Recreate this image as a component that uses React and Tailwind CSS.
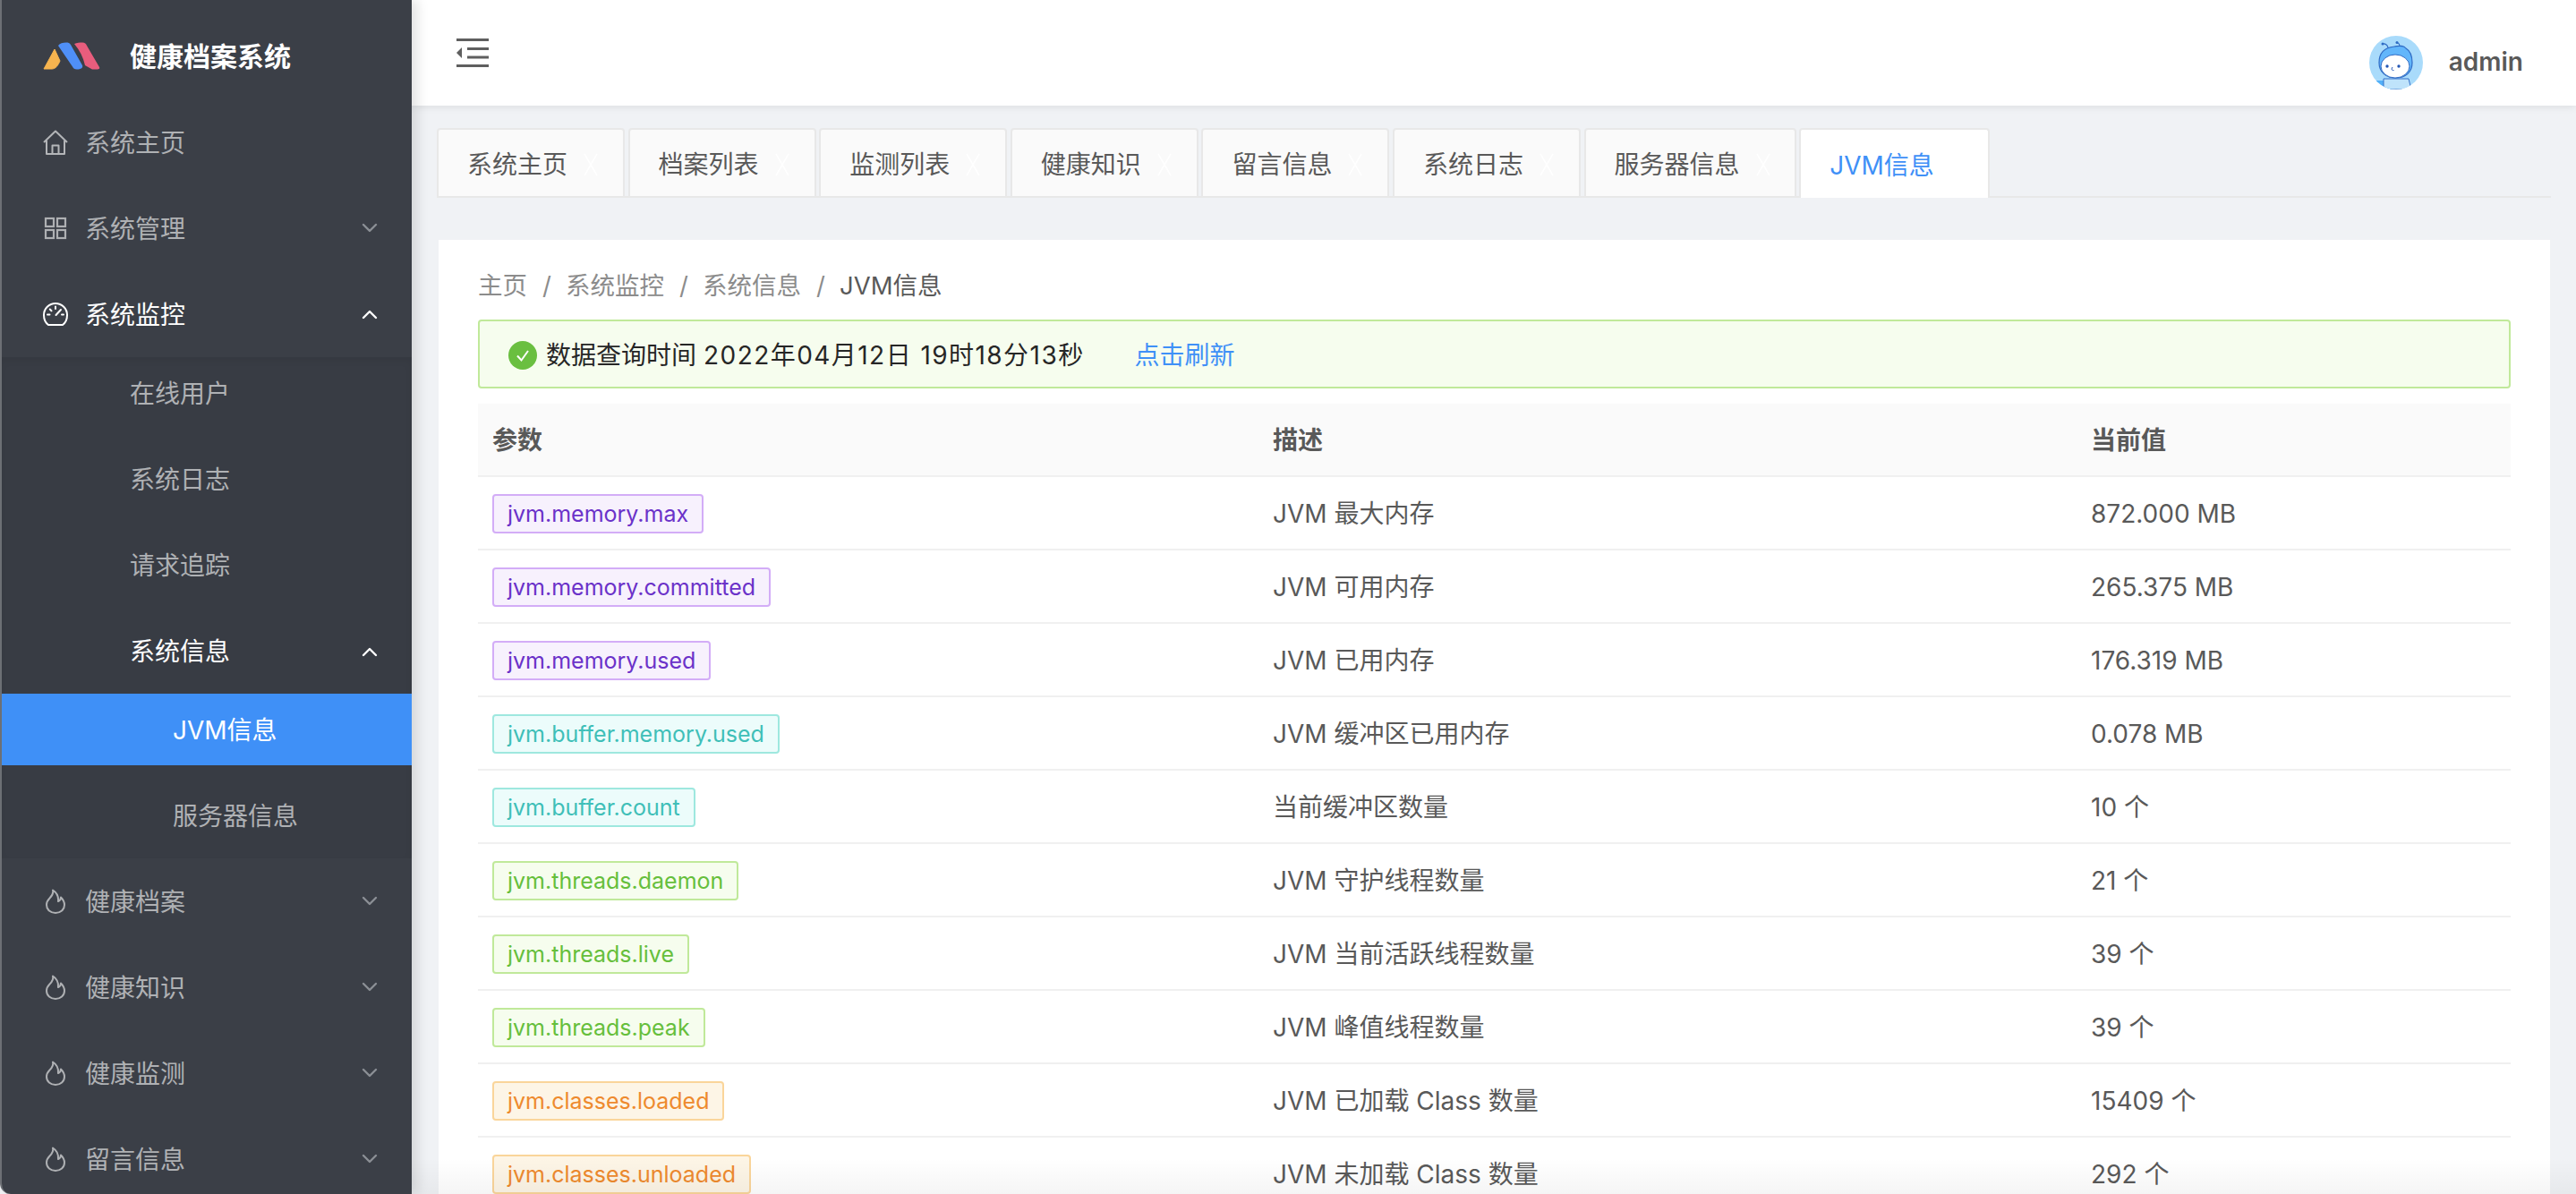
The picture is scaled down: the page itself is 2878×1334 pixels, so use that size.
import React from "react";

const FONT = { fontFamily: '"Inter", "Noto Sans CJK SC", sans-serif' };

const Chevron = ({ up, active }) => (
  <svg width="18" height="12" viewBox="0 0 18 12" fill="none" stroke={active ? "#ffffff" : "#8b8f95"} strokeWidth="2.4" strokeLinecap="round" strokeLinejoin="round" className="shrink-0">
    {up ? <path d="M2 10 L9 3 L16 10" /> : <path d="M2 2 L9 9 L16 2" />}
  </svg>
);

const HomeIcon = () => (
  <svg width="28" height="28" viewBox="0 0 28 28" fill="none" stroke="#b3b5b8" strokeWidth="2" strokeLinejoin="round">
    <path d="M1 14 L14 1.500 L27 14 M4 12 V27 H24 V12 M10.500 27 V17.500 H17.500 V27" />
  </svg>
);
const GridIcon = () => (
  <svg width="28" height="28" viewBox="0 0 28 28" fill="none" stroke="#aeb0b3" strokeWidth="2.200">
    <rect x="3" y="3" width="9" height="9" />
    <rect x="16" y="3" width="9" height="9" />
    <rect x="3" y="16" width="9" height="9" />
    <rect x="16" y="16" width="9" height="9" />
  </svg>
);
const GaugeIcon = () => (
  <svg width="28" height="26" viewBox="0 0 28 26" fill="none" stroke="#ffffff" strokeWidth="2" strokeLinecap="round">
    <path d="M6 25 C2.800 22.600 1 18.600 1 14 C1 6.800 6.800 1 14 1 C21.200 1 27 6.800 27 14 C27 18.600 25.200 22.600 22 25 Z" />
    <path d="M14 4.500 V7 M5 13.500 H7.500 M21 13.500 H23 M7.800 7.500 L9.500 9.200 M20 8 L14.500 14" />
  </svg>
);
const FlameIcon = () => (
  <svg width="22" height="28" viewBox="0 0 22 28" fill="none" stroke="#aeb0b3" strokeWidth="2" strokeLinejoin="round">
    <path d="M8 1.500 C9 5 7 8 4.500 10.500 C2.500 12.500 1 15 1 18 C1 23.500 5.500 27 11 27 C16.500 27 21 23.500 21 18 C21 14.500 19.500 12 17 9.500 C17 11.500 16 13 14 14 C14.500 9 12 4 8 1.500 Z" />
  </svg>
);
const Logo = () => (
  <svg width="64" height="31" viewBox="0 0 64 31" className="shrink-0">
    <path d="M1 30 L13 8 L19 21 C17 26 14 30 10 30 Z" fill="#f6b44f" stroke="#f6b44f" strokeLinejoin="round" />
    <path d="M17 4 C19 1 22 0.500 26 0.500 C28 0.500 30 1 31 3 L44 26 C45 29 42 30.500 38 30.500 C35 30.500 34 29.500 33 27.500 Z" fill="#4f8ff7" />
    <path d="M35 2 C38 0.500 41 0.500 44 0.500 C47 0.500 48 2 49 4 L63 28 C64 30 62 30.500 59 30.500 L55 30.500 L47 26 C45 17 41 9 35 2 Z" fill="#e85d7d" />
  </svg>
);
const Outdent = () => (
  <svg width="36" height="32" viewBox="0 0 36 32" fill="#5f5f5f">
    <rect x="0" y="0" width="36" height="3" />
    <rect x="12" y="10" width="24" height="3" />
    <rect x="12" y="19.500" width="24" height="3" />
    <rect x="0" y="29" width="36" height="3" />
    <path d="M0 16 L6 10 V22 Z" />
  </svg>
);
const Avatar = () => (
  <svg width="60" height="60" viewBox="0 0 60 60" className="shrink-0">
    <defs>
      <clipPath id="av"><circle cx="30" cy="30" r="30" /></clipPath>
    </defs>
    <g clipPath="url(#av)">
      <rect width="60" height="60" fill="#a9dbfb" />
      <path d="M0 50 H22 L26 60 H0 Z" fill="#53b0f8" />
      <path d="M16 48 H44 L47 60 H16 Z" fill="#bfe3fb" stroke="#3770c8" strokeWidth="1" />
      <path d="M11 30 C11 18 18 13 28 12 C33 11.500 38 10 41 14 C46 17 48 23 48 30 C48 41 40 47 30 47 C19 47 11 41 11 30 Z" fill="#62b6fb" stroke="#2f6bc4" strokeWidth="1.200" />
      <ellipse cx="29" cy="34" rx="16" ry="13" fill="#ffffff" stroke="#2f6bc4" strokeWidth="1" />
      <circle cx="20" cy="34" r="1.700" fill="#2456b4" />
      <circle cx="33" cy="34" r="1.700" fill="#2456b4" />
      <path d="M26 35 C24 38 26 39 27.500 38.500" fill="none" stroke="#2456b4" strokeWidth="1" />
      <path d="M21 13 C20 10 18 8.500 15 9 M34 12 C34 9 33 8 31 7.500" fill="none" stroke="#2f6bc4" strokeWidth="1.200" />
      <circle cx="15" cy="9" r="1.500" fill="#2f6bc4" />
      <circle cx="31" cy="7.500" r="1.500" fill="#2f6bc4" />
    </g>
  </svg>
);
const TopItem = ({ icon, label, chev, active }) => (
  <div className={`flex h-[96px] shrink-0 items-center pl-[48px] pr-[38px] ${active ? "text-white" : "text-[#afb1b4]"}`}>
    <div className="flex w-[28px] shrink-0 justify-center">{icon}</div>
    <span className="ml-[19px] flex-1 pt-[2px] text-[28px] leading-none">{label}</span>
    {chev && <Chevron up={active} active={active} />}
  </div>
);

const Sidebar = () => (
  <aside className="relative z-20 flex h-[1334px] w-[460px] shrink-0 flex-col overflow-hidden rounded-bl-[12px] border-l-2 border-[#6d7075] bg-[#3b3f47] shadow-[6px_0_14px_rgba(0,0,0,0.12)]">
    <div className="flex h-[111px] shrink-0 items-center pl-[46px] pt-[14px]">
      <Logo />
      <span className="ml-[33px] text-[30px] font-bold leading-none text-white">健康档案系统</span>
    </div>
    <div className="-ml-[2px]">
      <TopItem icon={<HomeIcon />} label="系统主页" />
      <TopItem icon={<GridIcon />} label="系统管理" chev />
      <TopItem icon={<GaugeIcon />} label="系统监控" chev active />
    </div>
    <div className="-ml-[2px] flex h-[560px] shrink-0 flex-col bg-[#383c44] pt-[1px] shadow-[inset_0_4px_8px_rgba(0,0,0,0.06)]">
      {["在线用户", "系统日志", "请求追踪"].map((t) => (
        <div key={t} className="flex h-[80px] shrink-0 items-center pl-[145px] text-[28px] leading-none text-[#afb1b4] [&:not(:first-child)]:mt-[16px]">{t}</div>
      ))}
      <div className="mt-[16px] flex h-[80px] shrink-0 items-center pl-[145px] pr-[38px] text-[28px] leading-none text-white">
        <span className="flex-1">系统信息</span>
        <Chevron up active />
      </div>
      <div className="mt-[7px] flex h-[80px] shrink-0 items-center bg-[#3f90f7] pl-[193px] pt-[1px] text-[28px] leading-none text-white">JVM信息</div>
      <div className="mt-[16px] flex h-[80px] shrink-0 items-center pl-[193px] pt-[1px] text-[28px] leading-none text-[#afb1b4]">服务器信息</div>
    </div>
    <div className="-ml-[2px]">
      {["健康档案", "健康知识", "健康监测", "留言信息"].map((t) => (
        <TopItem key={t} icon={<FlameIcon />} label={t} chev />
      ))}
    </div>
  </aside>
);

const TABS = [
  ["系统主页", 210],
  ["档案列表", 210],
  ["监测列表", 210],
  ["健康知识", 210],
  ["留言信息", 210],
  ["系统日志", 210],
  ["服务器信息", 237],
];

const Tabs = () => (
  <div className="ml-[28px] mr-[28px] mt-[25px] flex h-[78px] shrink-0 items-end gap-[3.600px] border-b-2 border-[#e8e8e8]">
    {TABS.map(([t, w]) => (
      <div key={t} className="-mb-[2px] flex h-[78px] items-center rounded-t-[4px] border-2 border-[#e8e8e8] bg-[#fafafa] pl-[32px] pt-[3px] text-[28px] leading-none text-[#595959]" style={{ width: w }}>
        <span>{t}</span>
        <svg width="18" height="26" viewBox="0 0 18 26" className="ml-[17px]" stroke="#ffffff" strokeWidth="1.500" fill="none">
          <path d="M2 1 L16 25 M16 1 L2 25" />
        </svg>
      </div>
    ))}
    <div className="-mb-[2px] flex h-[78px] w-[213px] items-center rounded-t-[4px] border-x-2 border-t-2 border-[#e8e8e8] bg-white pl-[32px] pt-[3px] text-[28px] leading-none text-[#3f90f7]">JVM信息</div>
  </div>
);

const TAG = {
  purple: "border-[#d3adf7] bg-[#f7f1fd] text-[#6b32c9]",
  cyan: "border-[#9ee8df] bg-[#ecfcfb] text-[#3fbfb8]",
  green: "border-[#c0e99a] bg-[#f6fdee] text-[#66bf3c]",
  orange: "border-[#fad59a] bg-[#fdf5e6] text-[#ee8a2e]",
};

const ROWS = [
  ["jvm.memory.max", "purple", "JVM 最大内存", "872.000 MB"],
  ["jvm.memory.committed", "purple", "JVM 可用内存", "265.375 MB"],
  ["jvm.memory.used", "purple", "JVM 已用内存", "176.319 MB"],
  ["jvm.buffer.memory.used", "cyan", "JVM 缓冲区已用内存", "0.078 MB"],
  ["jvm.buffer.count", "cyan", "当前缓冲区数量", "10 个"],
  ["jvm.threads.daemon", "green", "JVM 守护线程数量", "21 个"],
  ["jvm.threads.live", "green", "JVM 当前活跃线程数量", "39 个"],
  ["jvm.threads.peak", "green", "JVM 峰值线程数量", "39 个"],
  ["jvm.classes.loaded", "orange", "JVM 已加载 Class 数量", "15409 个"],
  ["jvm.classes.unloaded", "orange", "JVM 未加载 Class 数量", "292 个"],
];

const Crumb = ({ children, last }) => (
  <span className={last ? "text-[#595959]" : "text-[#8c8c8c]"}>{children}</span>
);

const Content = () => (
  <div className="ml-[30px] mr-[29px] mt-[47px] flex-1 bg-white px-[44px] pt-[38px]">
    <div className="flex h-[28px] items-center text-[27.500px] leading-none">
      <Crumb>主页</Crumb>
      <span className="mx-[17px] w-[9px] text-[#8c8c8c]">/</span>
      <Crumb>系统监控</Crumb>
      <span className="mx-[17px] w-[9px] text-[#8c8c8c]">/</span>
      <Crumb>系统信息</Crumb>
      <span className="mx-[17px] w-[9px] text-[#8c8c8c]">/</span>
      <Crumb last>JVM信息</Crumb>
    </div>
    <div className="mt-[23px] flex h-[77px] items-center rounded-[4px] border-2 border-[#c0e99a] bg-[#f6fdee] pl-[32px] pt-[3px] text-[28px] leading-none text-[#262626]">
      <svg width="32" height="32" viewBox="0 0 32 32" className="shrink-0">
        <circle cx="16" cy="16" r="16" fill="#6abf40" />
        <path d="M10 16.500 L14.500 21.500 L22 11" fill="none" stroke="#fff" strokeWidth="2" />
      </svg>
      <span className="ml-[10px]">数据查询时间</span>
      <span className="ml-[8px] tracking-[1.450px]">2022年04月12日 19时18分13秒</span>
      <span className="ml-[56px] text-[#3f90f7]">点击刷新</span>
    </div>
    <div className="mt-[17px]">
      <div className="grid h-[82px] grid-cols-[872px_914px_1fr] items-center border-b-2 border-[#f0f0f0] bg-[#fafafa] pt-[2px] text-[28px] font-bold leading-none text-[#595959]">
        <div className="pl-[16px]">参数</div>
        <div className="pl-[16px]">描述</div>
        <div className="pl-[16px]">当前值</div>
      </div>
      {ROWS.map(([k, c, d, v]) => (
        <div key={k} className="grid h-[82px] grid-cols-[872px_914px_1fr] items-center border-b-2 border-[#f0f0f0] pt-[2px] text-[28px] leading-none text-[#595959]">
          <div className="pl-[16px]">
            <span className={`inline-flex h-[44px] items-center rounded-[4px] border-2 px-[15px] text-[25px] leading-none ${TAG[c]}`}>{k}</span>
          </div>
          <div className="pl-[16px]">{d}</div>
          <div className="pl-[16px]">{v}</div>
        </div>
      ))}
    </div>
  </div>
);

export default function App() {
  return (
    <div className="relative flex h-[1334px] w-[2878px] overflow-hidden bg-[#f0f2f5]" style={FONT}>
      <Sidebar />
      <main className="flex h-[1334px] min-w-0 flex-1 flex-col overflow-hidden">
        <header className="relative z-10 flex h-[118px] shrink-0 items-center bg-white pl-[50px] pr-[59px] shadow-[0_2px_8px_rgba(0,0,0,0.08)]">
          <Outdent />
          <div className="flex-1" />
          <div className="mt-[22px] flex items-center">
            <Avatar />
            <span className="-mt-[3px] ml-[29px] text-[28px] font-semibold leading-none text-[#595959]">admin</span>
          </div>
        </header>
        <Tabs />
        <Content />
      </main>
      <div className="pointer-events-none absolute bottom-0 left-[460px] right-0 h-[40px] bg-gradient-to-b from-transparent to-[rgba(0,0,0,0.04)]" />
    </div>
  );
}
